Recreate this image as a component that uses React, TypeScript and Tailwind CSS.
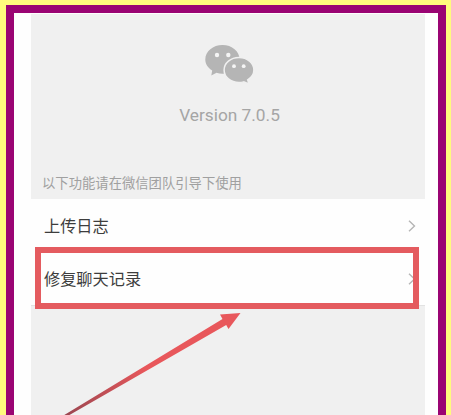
function WeChatLogo() {
  return (
    <svg className="block h-10 w-[50px]" viewBox="0 0 50 40" fill="#b5b5b5">
      <path d="M17.500 1C8 1 .3 7.300.3 15.400c0 4.600 2.600 8.400 6.900 11L6.300 31.400l5.200-2.600c2 .6 3.800.9 6 .9 9.400 0 17.100-6.300 17.100-14.300S27 1 17.500 1Z" />
      <path
        d="M34 13.400c-8.300 0-14.900 5.600-14.900 12.600S25.700 38.500 34 38.500c1.700 0 3.200-.2 4.700-.6l5.200 2-1.200-4c3.900-2.500 6.200-5.900 6.200-9.900 0-7-6.600-12.600-14.900-12.600Z"
        stroke="#f0f0f0"
        strokeWidth="1.500"
      />
      <g fill="#f5f5f5">
        <circle cx="12" cy="11" r="2.200" />
        <circle cx="23.300" cy="11" r="2.200" />
        <circle cx="29" cy="22.200" r="1.900" />
        <circle cx="38.700" cy="22.200" r="1.900" />
      </g>
    </svg>
  );
}

function Chevron() {
  return (
    <svg className="h-3 w-2 shrink-0" viewBox="0 0 8 12" fill="none" stroke="#b5b5b5" strokeWidth="1.400">
      <path d="M1 .7 6.500 6 1 11.300" />
    </svg>
  );
}

function Row({ label }: { label: string }) {
  return (
    <div className="flex h-[53px] items-center justify-between pr-[9px] pl-[13px] text-[16.200px] text-[#3d3d3d]">
      <span>{label}</span>
      <Chevron />
    </div>
  );
}

export default function App() {
  return (
    <div className="relative h-[415px] w-[451px] overflow-hidden bg-[#fffb7d] pt-[5px] pr-[5px] pl-[6px] font-['Noto_Sans_CJK_SC',sans-serif]">
      <div className="h-[430px] border-8 border-[#9a0473] bg-[#fefefe] pt-px pr-[13px] pl-[17px]">
        <div className="flex h-[185px] flex-col items-center bg-[#f0f0f0] pt-[30px]">
          <div className="pl-[4px]">
            <WeChatLogo />
          </div>
          <div className="mt-[19px] pl-[3px] font-[Roboto,sans-serif] text-[17.300px] leading-[24px] text-[#a5a5a5]">
            Version 7.0.5
          </div>
          <div className="mt-[46px] self-start pl-[11px] text-[13.330px] leading-[20px] text-[#a0a0a0]">
            以下功能请在微信团队引导下使用
          </div>
        </div>
        <Row label="上传日志" />
        <Row label="修复聊天记录" />
        <div className="h-[130px] border-t border-[#e2e2e2] bg-[#f0f0f0]" />
      </div>
      <div className="absolute top-[247px] left-[35px] h-[62px] w-[384px] border-6 border-[#e45b5f]" />
      <svg className="absolute top-0 left-0 h-full w-full" viewBox="0 0 451 415">
        <defs>
          <linearGradient id="shaft" gradientUnits="userSpaceOnUse" x1="62" y1="416" x2="145" y2="367">
            <stop offset="0" stopColor="#984650" />
            <stop offset="1" stopColor="#e8575b" />
          </linearGradient>
        </defs>
        <path d="M61 417 222.500 319 220 314.500 240.500 313 228.500 329 226.200 325 66 417Z" fill="url(#shaft)" />
      </svg>
    </div>
  );
}
